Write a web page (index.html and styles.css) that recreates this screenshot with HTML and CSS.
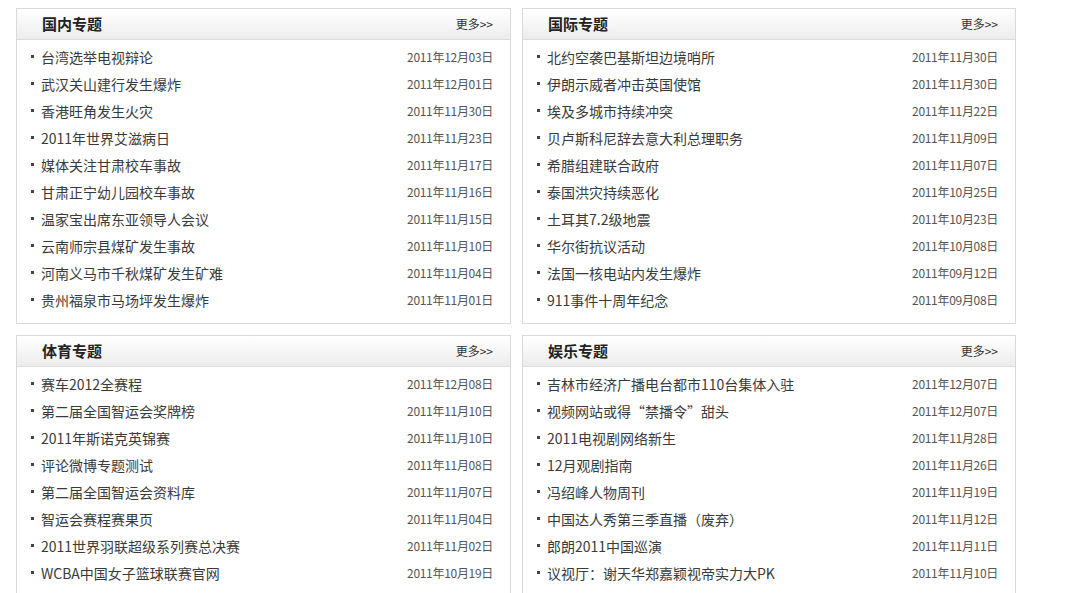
FILE: index.html
```html
<!DOCTYPE html>
<html lang="zh-CN">
<head>
<meta charset="utf-8">
<title>专题</title>
<link rel="stylesheet" href="styles.css">
</head>
<body>
<div class="page">
  <section class="box">
    <div class="box-head"><h2>国内专题</h2><a class="more" href="#">更多&gt;&gt;</a></div>
    <ul class="list">
      <li><a href="#">台湾选举电视辩论</a><span class="date">2011年12月03日</span></li>
      <li><a href="#">武汉关山建行发生爆炸</a><span class="date">2011年12月01日</span></li>
      <li><a href="#">香港旺角发生火灾</a><span class="date">2011年11月30日</span></li>
      <li><a href="#">2011年世界艾滋病日</a><span class="date">2011年11月23日</span></li>
      <li><a href="#">媒体关注甘肃校车事故</a><span class="date">2011年11月17日</span></li>
      <li><a href="#">甘肃正宁幼儿园校车事故</a><span class="date">2011年11月16日</span></li>
      <li><a href="#">温家宝出席东亚领导人会议</a><span class="date">2011年11月15日</span></li>
      <li><a href="#">云南师宗县煤矿发生事故</a><span class="date">2011年11月10日</span></li>
      <li><a href="#">河南义马市千秋煤矿发生矿难</a><span class="date">2011年11月04日</span></li>
      <li><a href="#">贵州福泉市马场坪发生爆炸</a><span class="date">2011年11月01日</span></li>
    </ul>
  </section>
  <section class="box">
    <div class="box-head"><h2>国际专题</h2><a class="more" href="#">更多&gt;&gt;</a></div>
    <ul class="list">
      <li><a href="#">北约空袭巴基斯坦边境哨所</a><span class="date">2011年11月30日</span></li>
      <li><a href="#">伊朗示威者冲击英国使馆</a><span class="date">2011年11月30日</span></li>
      <li><a href="#">埃及多城市持续冲突</a><span class="date">2011年11月22日</span></li>
      <li><a href="#">贝卢斯科尼辞去意大利总理职务</a><span class="date">2011年11月09日</span></li>
      <li><a href="#">希腊组建联合政府</a><span class="date">2011年11月07日</span></li>
      <li><a href="#">泰国洪灾持续恶化</a><span class="date">2011年10月25日</span></li>
      <li><a href="#">土耳其7.2级地震</a><span class="date">2011年10月23日</span></li>
      <li><a href="#">华尔街抗议活动</a><span class="date">2011年10月08日</span></li>
      <li><a href="#">法国一核电站内发生爆炸</a><span class="date">2011年09月12日</span></li>
      <li><a href="#">911事件十周年纪念</a><span class="date">2011年09月08日</span></li>
    </ul>
  </section>
  <section class="box">
    <div class="box-head"><h2>体育专题</h2><a class="more" href="#">更多&gt;&gt;</a></div>
    <ul class="list">
      <li><a href="#">赛车2012全赛程</a><span class="date">2011年12月08日</span></li>
      <li><a href="#">第二届全国智运会奖牌榜</a><span class="date">2011年11月10日</span></li>
      <li><a href="#">2011年斯诺克英锦赛</a><span class="date">2011年11月10日</span></li>
      <li><a href="#">评论微博专题测试</a><span class="date">2011年11月08日</span></li>
      <li><a href="#">第二届全国智运会资料库</a><span class="date">2011年11月07日</span></li>
      <li><a href="#">智运会赛程赛果页</a><span class="date">2011年11月04日</span></li>
      <li><a href="#">2011世界羽联超级系列赛总决赛</a><span class="date">2011年11月02日</span></li>
      <li><a href="#">WCBA中国女子篮球联赛官网</a><span class="date">2011年10月19日</span></li>
    </ul>
  </section>
  <section class="box">
    <div class="box-head"><h2>娱乐专题</h2><a class="more" href="#">更多&gt;&gt;</a></div>
    <ul class="list">
      <li><a href="#">吉林市经济广播电台都市110台集体入驻</a><span class="date">2011年12月07日</span></li>
      <li><a href="#">视频网站或得“禁播令”甜头</a><span class="date">2011年12月07日</span></li>
      <li><a href="#">2011电视剧网络新生</a><span class="date">2011年11月28日</span></li>
      <li><a href="#">12月观剧指南</a><span class="date">2011年11月26日</span></li>
      <li><a href="#">冯绍峰人物周刊</a><span class="date">2011年11月19日</span></li>
      <li><a href="#">中国达人秀第三季直播（废弃）</a><span class="date">2011年11月12日</span></li>
      <li><a href="#">郎朗2011中国巡演</a><span class="date">2011年11月11日</span></li>
      <li><a href="#">议视厅：谢天华郑嘉颖视帝实力大PK</a><span class="date">2011年11月10日</span></li>
    </ul>
  </section>
</div>
</body>
</html>
```

FILE: styles.css
```css
html, body {
  margin: 0;
  padding: 0;
  background: #fff;
}
body {
  font-family: "Noto Sans CJK SC", "DejaVu Sans", sans-serif;
  color: #333;
}
.page {
  display: grid;
  grid-template-columns: 495px 494px;
  column-gap: 11px;
  row-gap: 11px;
  padding: 8px 0 0 16px;
  align-items: start;
}
.box {
  border: 1px solid #d9d9d9;
  box-sizing: border-box;
}
.box-head {
  height: 30px;
  border-bottom: 1px solid #dcdcdc;
  background: linear-gradient(to bottom, #ffffff 0%, #f8f8f8 40%, #ececec 100%);
  display: flex;
  align-items: center;
  justify-content: space-between;
  padding: 0 17px 0 25px;
}
.box-head h2 {
  margin: 0;
  font-size: 15px;
  font-weight: bold;
  color: #222;
  line-height: 30px;
}
.more {
  font-size: 12px;
  color: #333;
  text-decoration: none;
  line-height: 30px;
}
.list {
  list-style: none;
  margin: 0;
  padding: 3px 17px 10px 14px;
}
.list li {
  height: 27px;
  display: flex;
  align-items: center;
  justify-content: space-between;
}
.list li a {
  font-size: 14px;
  color: #3a3a3a;
  text-decoration: none;
  display: flex;
  align-items: center;
  white-space: nowrap;
}
.list li a::before {
  content: "";
  width: 3px;
  height: 3px;
  background: #444;
  margin-right: 7px;
  flex: none;
}
.date {
  font-size: 12px;
  color: #555;
  white-space: nowrap;
  letter-spacing: -0.3px;
}
```
